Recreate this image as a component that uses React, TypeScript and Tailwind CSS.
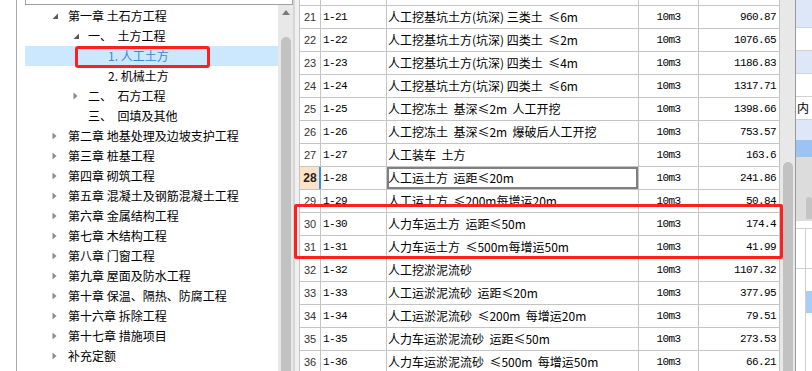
import React from "react";

type TreeItem = { lvl: 0 | 1 | 2; arrow?: "down" | "right"; text: string; selected?: boolean };

const tree: TreeItem[] = [
  { lvl: 0, arrow: "down", text: "第一章 土石方工程" },
  { lvl: 1, arrow: "down", text: "一、  土方工程" },
  { lvl: 2, text: "1. 人工土方", selected: true },
  { lvl: 2, text: "2. 机械土方" },
  { lvl: 1, arrow: "right", text: "二、  石方工程" },
  { lvl: 1, text: "三、  回填及其他" },
  { lvl: 0, arrow: "right", text: "第二章 地基处理及边坡支护工程" },
  { lvl: 0, arrow: "right", text: "第三章 桩基工程" },
  { lvl: 0, arrow: "right", text: "第四章 砌筑工程" },
  { lvl: 0, arrow: "right", text: "第五章 混凝土及钢筋混凝土工程" },
  { lvl: 0, arrow: "right", text: "第六章 金属结构工程" },
  { lvl: 0, arrow: "right", text: "第七章 木结构工程" },
  { lvl: 0, arrow: "right", text: "第八章 门窗工程" },
  { lvl: 0, arrow: "right", text: "第九章 屋面及防水工程" },
  { lvl: 0, arrow: "right", text: "第十章 保温、隔热、防腐工程" },
  { lvl: 0, arrow: "right", text: "第十六章 拆除工程" },
  { lvl: 0, arrow: "right", text: "第十七章 措施项目" },
  { lvl: 0, arrow: "right", text: "补充定额" },
];

const rows: [string, string, string, string, string][] = [
  ["21", "1-21", "人工挖基坑土方(坑深) 三类土  ≤6m", "10m3", "960.87"],
  ["22", "1-22", "人工挖基坑土方(坑深) 四类土  ≤2m", "10m3", "1076.65"],
  ["23", "1-23", "人工挖基坑土方(坑深) 四类土  ≤4m", "10m3", "1186.83"],
  ["24", "1-24", "人工挖基坑土方(坑深) 四类土  ≤6m", "10m3", "1317.71"],
  ["25", "1-25", "人工挖冻土  基深≤2m  人工开挖", "10m3", "1398.66"],
  ["26", "1-26", "人工挖冻土  基深≤2m  爆破后人工开挖", "10m3", "753.57"],
  ["27", "1-27", "人工装车  土方", "10m3", "163.6"],
  ["28", "1-28", "人工运土方  运距≤20m", "10m3", "241.86"],
  ["29", "1-29", "人工运土方  ≤200m每增运20m", "10m3", "50.84"],
  ["30", "1-30", "人力车运土方  运距≤50m", "10m3", "174.4"],
  ["31", "1-31", "人力车运土方  ≤500m每增运50m", "10m3", "41.99"],
  ["32", "1-32", "人工挖淤泥流砂", "10m3", "1107.32"],
  ["33", "1-33", "人工运淤泥流砂  运距≤20m", "10m3", "377.95"],
  ["34", "1-34", "人工运淤泥流砂  ≤200m  每增运20m", "10m3", "79.51"],
  ["35", "1-35", "人力车运淤泥流砂  运距≤50m", "10m3", "273.53"],
  ["36", "1-36", "人力车运淤泥流砂  ≤500m  每增运50m", "10m3", "66.21"],
];

function Arrow({ dir }: { dir: "down" | "right" }) {
  if (dir === "down") {
    return (
      <svg width="7" height="7" viewBox="0 0 7 7" className="block">
        <polygon points="6,0.5 6,6 0.5,6" fill="#595959" />
      </svg>
    );
  }
  return (
    <svg width="5" height="8" viewBox="0 0 5 8" className="block">
      <polygon points="0.5,0.5 4.5,4 0.5,7.5" fill="#8a8a8a" />
    </svg>
  );
}

function TreeRow({ item }: { item: TreeItem }) {
  const pad = item.lvl === 0 ? "pl-[27px]" : item.lvl === 1 ? "pl-[48px]" : "pl-[83px]";
  const aw = item.lvl === 0 ? "w-[16px]" : "w-[15px]";
  return (
    <div
      className={`flex h-[20px] items-center ${pad} ${item.selected ? "bg-[#cce8ff] text-[#3b86d6]" : "text-black"}`}
    >
      {item.lvl < 2 && (
        <span className={`flex ${aw} shrink-0 items-center`}>{item.arrow ? <Arrow dir={item.arrow} /> : null}</span>
      )}
      <span className="whitespace-pre leading-[20px]">{item.text}</span>
    </div>
  );
}

function TableRow({ r }: { r: [string, string, string, string, string] }) {
  const [n, code, name, unit, price] = r;
  const sel = n === "28";
  return (
    <div className="flex h-[23px] shrink-0 border-b border-[#c4c4c4]">
      <div
        className={`flex w-[21px] shrink-0 items-center justify-center border-r font-[family-name:'Liberation_Sans',sans-serif] ${
          sel
            ? "border-[#3a8ee6] bg-[#fde3c6] text-[12px] font-bold text-[#222] shadow-[inset_-1px_0_0_#3a8ee6]"
            : "border-[#c4c4c4] text-[11px] text-[#333]"
        }`}
      >
        {n}
      </div>
      <div className="flex w-[66px] shrink-0 items-center border-r border-[#c4c4c4] pl-[2px] font-[family-name:'Liberation_Mono',monospace] text-[11px] tracking-[-0.6px]">
        {code}
      </div>
      <div
        className={`flex w-[252px] shrink-0 items-center border-r border-[#c4c4c4] pl-[1px] whitespace-pre text-[12px] ${
          sel ? "shadow-[inset_0_0_0_2px_#808080]" : ""
        }`}
      >
        {name}
      </div>
      <div className="flex w-[60px] shrink-0 items-center justify-center border-r border-[#c4c4c4] font-[family-name:'Liberation_Mono',monospace] text-[11px] tracking-[-0.6px]">
        {unit}
      </div>
      <div className="flex w-[81px] shrink-0 items-center justify-end border-r border-[#c4c4c4] pr-[3px] font-[family-name:'Liberation_Mono',monospace] text-[11px] tracking-[-0.6px]">
        {price}
      </div>
    </div>
  );
}

export default function App() {
  return (
    <div className="relative flex h-[371px] w-[812px] overflow-hidden bg-white font-[family-name:'Noto_Sans_CJK_SC',sans-serif] text-black">
      {/* left margin with border */}
      <div className="w-[17px] shrink-0 border-r border-[#a9a9a9] bg-white" />

      {/* tree panel */}
      <div className="flex w-[276px] shrink-0 flex-col">
        <div className="ml-[8px] h-[5px] shrink-0 border-x border-b border-[#a0a0a0]" />
        <div className="flex min-h-0 flex-1">
          <div className="w-[261px] shrink-0 overflow-hidden pl-[8px] pt-[1px] text-[12px]">
            {tree.map((t, i) => (
              <TreeRow key={i} item={t} />
            ))}
          </div>
          <div className="flex w-[15px] shrink-0 flex-col items-center bg-[#e8e8e8]">
            <svg width="8" height="5" viewBox="0 0 8 5" className="mt-[5px] block">
              <polygon points="4,0 8,5 0,5" fill="#7a7a7a" />
            </svg>
            <div className="mt-[22px] w-[10px] flex-1 rounded-t-full bg-[#c2c2c2]" />
          </div>
        </div>
      </div>

      {/* divider */}
      <div className="flex w-[6px] shrink-0">
        <div className="w-[2px] bg-[#d6d6d6]" />
        <div className="flex-1 bg-[#f0f0f0]" />
      </div>

      {/* table */}
      <div className="flex w-[481px] shrink-0 flex-col border-l border-[#c4c4c4]">
        <div className="flex h-[6px] shrink-0 border-b border-[#c4c4c4]">
          <div className="w-[21px] border-r border-[#c4c4c4]" />
          <div className="w-[66px] border-r border-[#c4c4c4]" />
          <div className="w-[252px] border-r border-[#c4c4c4]" />
          <div className="w-[60px] border-r border-[#c4c4c4]" />
          <div className="w-[81px] border-r border-[#c4c4c4]" />
        </div>
        {rows.map((r) => (
          <TableRow key={r[0]} r={r} />
        ))}
      </div>

      {/* table scrollbar */}
      <div className="flex w-[15px] shrink-0 flex-col items-center bg-[#e8e8e8]">
        <div className="mt-[162px] w-[10px] flex-1 rounded-t-full bg-[#c2c2c2]" />
      </div>

      {/* right strip */}
      <div className="flex w-[17px] shrink-0 flex-col border-l border-[#9a9a9a]">
        <div className="h-[28px] border-b border-[#c8d4e8] bg-[#dde7f8]" />
        <div className="h-[23px] border-b border-[#d0d0d0] bg-white" />
        <div className="h-[23px] border-b border-[#c8d4e8] bg-[#dde7f8]" />
        <div className="h-[23px] border-b border-[#d0d0d0] bg-white" />
        <div className="flex h-[23px] items-center overflow-hidden border-b border-[#d0d0d0] bg-white pl-[1px] text-[12px] leading-none">
          内
        </div>
        <div className="h-[20px] bg-[#dde7f8]" />
        <div className="h-[17px] bg-[#9cc4f2]" />
        <div className="flex h-[64px] flex-col bg-[#dcdcdc]">
          <div className="mt-[40px] ml-[10px] h-[22px] rounded-t-[3px] bg-[#c4c4c4]" />
        </div>
        <div className="flex flex-1 flex-col bg-white">
          <div className="h-[8px] border-b border-[#d0d0d0]" />
          <div className="flex h-[40px] border-b border-[#d0d0d0]">
            <div className="w-[10px] border-r border-[#d0d0d0]" />
          </div>
          <div className="flex h-[22px]">
            <div className="w-[10px] border-r border-[#d0d0d0]" />
          </div>
          <div className="flex h-[22px]">
            <div className="w-[10px] border-r border-[#d0d0d0]" />
            <div className="flex-1 bg-[#a9cdf4]" />
          </div>
          <div className="flex flex-1">
            <div className="w-[10px] border-r border-[#d0d0d0]" />
          </div>
        </div>
      </div>

      {/* annotation boxes */}
      <div className="pointer-events-none absolute left-[75px] top-[46px] h-[22px] w-[135px] rounded-[3px] border-[3px] border-[#ff1f1f]" />
      <div className="pointer-events-none absolute left-[294px] top-[204px] h-[55px] w-[489px] rounded-[2px] border-[3px] border-[#ff1f1f]" />
    </div>
  );
}
